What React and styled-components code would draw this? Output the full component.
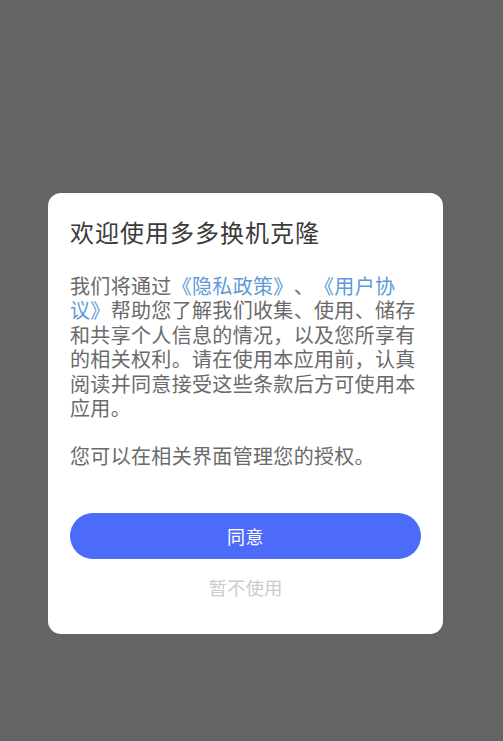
import React from "react";
import styled, { createGlobalStyle } from "styled-components";

const GlobalStyle = createGlobalStyle`
  html, body {
    margin: 0;
    padding: 0;
    background: #646464;
  }
  body {
    font-family: "Noto Sans CJK SC", "Noto Sans", sans-serif;
    text-spacing-trim: space-all;
  }
`;

const Screen = styled.div`
  width: 503px;
  height: 741px;
  background: #646464;
  padding: 193px 0 0 48px;
  box-sizing: border-box;
`;

const Dialog = styled.div`
  width: 395px;
  box-sizing: border-box;
  background: #ffffff;
  border-radius: 13px;
  padding: 23px 22px 35px;
  display: flex;
  flex-direction: column;
`;

const Title = styled.h2`
  margin: 0;
  font-size: 24px;
  letter-spacing: 1px;
  line-height: 32px;
  font-weight: 400;
  color: #3a3a3a;
`;

const Body = styled.div`
  margin-top: 26px;
  font-size: 20px;
  letter-spacing: 0.33px;
  line-height: 24.4px;
  color: #6a6a6a;
  line-break: strict;
  text-spacing-trim: space-all;

  p {
    margin: 0;
  }
  p + p {
    margin-top: 24px;
  }
`;

const Link = styled.span`
  color: #5f9ad6;
`;

const AgreeButton = styled.button`
  margin-top: 44px;
  height: 46px;
  width: 100%;
  border: none;
  border-radius: 23px;
  background: #4d6bfb;
  color: #ffffff;
  font-family: inherit;
  font-size: 18px;
  letter-spacing: 0.5px;
  cursor: pointer;
`;

const DeclineButton = styled.button`
  margin-top: 16px;
  height: 24px;
  padding: 0;
  border: none;
  background: none;
  color: #cccccc;
  font-family: inherit;
  font-size: 18.5px;
  line-height: 24px;
  cursor: pointer;
`;

const App = () => {
  return (
    <Screen>
      <GlobalStyle />
      <Dialog>
        <Title>欢迎使用多多换机克隆</Title>
        <Body>
          <p>
            我们将通过<Link>《隐私政策》</Link>、<Link>《用户协议》</Link>
            帮助您了解我们收集、使用、储存和共享个人信息的情况，以及您所享有的相关权利。请在使用本应用前，认真阅读并同意接受这些条款后方可使用本应用。
          </p>
          <p>您可以在相关界面管理您的授权。</p>
        </Body>
        <AgreeButton>同意</AgreeButton>
        <DeclineButton>暂不使用</DeclineButton>
      </Dialog>
    </Screen>
  );
};

export default App;
